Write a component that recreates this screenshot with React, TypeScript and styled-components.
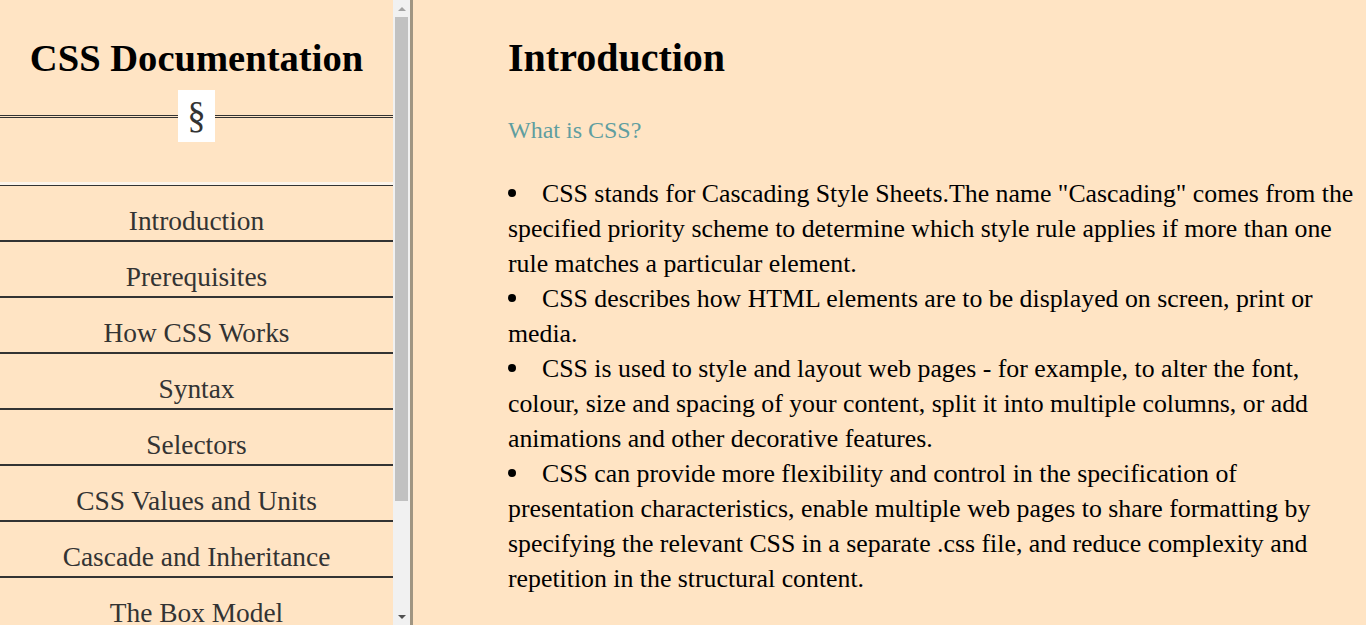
import React from 'react'
import styled, {createGlobalStyle} from 'styled-components'

const GlobalStyle = createGlobalStyle`
    html, body {
        margin: 0;
        padding: 0;
        background-color: #ffe4c4;
        font-family: "Liberation Serif", "Times New Roman", serif;
    }
`

const topics = [
    'Introduction',
    'Prerequisites',
    'How CSS Works',
    'Syntax',
    'Selectors',
    'CSS Values and Units',
    'Cascade and Inheritance',
    'The Box Model',
    'Backgrounds and Borders',
    'Reference',
]

const points = [
    'CSS stands for Cascading Style Sheets.The name "Cascading" comes from the specified priority scheme to determine which style rule applies if more than one rule matches a particular element.',
    'CSS describes how HTML elements are to be displayed on screen, print or media.',
    'CSS is used to style and layout web pages - for example, to alter the font, colour, size and spacing of your content, split it into multiple columns, or add animations and other decorative features.',
    'CSS can provide more flexibility and control in the specification of presentation characteristics, enable multiple web pages to share formatting by specifying the relevant CSS in a separate .css file, and reduce complexity and repetition in the structural content.',
]

const App: React.FC = () => {
    return (
        <>
            <GlobalStyle />
            <Page>
                <Sidebar>
                    <NavPane>
                        <Header>
                            <Title>CSS Documentation</Title>
                            <Divider>
                                <Rule />
                                <Section>§</Section>
                                <Rule />
                            </Divider>
                        </Header>
                        <NavList>
                            {topics.map(topic => (
                                <NavLink key={topic} href={'#' + topic.replace(/ /g, '_')}>
                                    {topic}
                                </NavLink>
                            ))}
                        </NavList>
                    </NavPane>

                    {/* the browser hides real scrollbars here, so draw one */}
                    <ScrollBar>
                        <ScrollButton>
                            <Arrow up />
                        </ScrollButton>
                        <Track>
                            <Thumb style={{height: 484}} />
                        </Track>
                        <ScrollButton>
                            <Arrow />
                        </ScrollButton>
                    </ScrollBar>
                </Sidebar>

                <Main>
                    <Heading>Introduction</Heading>
                    <SubHeading>What is CSS?</SubHeading>
                    <Points>
                        {points.map((p, i) => <Point key={i}>{p}</Point>)}
                    </Points>
                </Main>
            </Page>
        </>
    )
}

export default App

const Page = styled.div`
    display: flex;
    height: 100vh;
    overflow: hidden;
`

const Sidebar = styled.nav`
    flex-shrink: 0;
    display: flex;
    height: 100vh;
    border-right: 3px solid #a09582;
`

const NavPane = styled.div`
    width: 393px;
    height: 100%;
    overflow: hidden;
`

const ScrollBar = styled.div`
    width: 17px;
    display: flex;
    flex-direction: column;
    background-color: #f1f1f1;
`

const ScrollButton = styled.div`
    height: 17px;
    display: flex;
    justify-content: center;
    align-items: center;
`

const Arrow = styled.div<{up?: boolean}>`
    width: 0;
    height: 0;
    border-left: 4px solid transparent;
    border-right: 4px solid transparent;
    ${props => props.up
        ? 'border-bottom: 4px solid #a3a3a3;'
        : 'border-top: 4px solid #505050;'}
`

const Track = styled.div`
    flex: 1;
    padding: 0 2px;
`

const Thumb = styled.div`
    background-color: #c1c1c1;
`

const Header = styled.header`
    padding: 36px 0 40px;
    text-align: center;
    border-bottom: 3px solid #fcf4ea;
`

const Title = styled.h1`
    margin: 0 0 10px;
    font-size: 38.6px;
    line-height: 44px;
    font-weight: bold;
    color: #000;
`

const Divider = styled.div`
    display: flex;
    align-items: center;
`

const Rule = styled.div`
    flex: 1;
    border-top: 3px double #333;
`

const Section = styled.span`
    width: 37px;
    height: 52px;
    background-color: #fff;
    color: #333;
    font-size: 37px;
    line-height: 52px;
    text-align: center;
`

const NavList = styled.div`
    display: flex;
    flex-direction: column;
    border-top: 1px solid #333;
`

const NavLink = styled.a`
    display: block;
    box-sizing: border-box;
    height: 56px;
    padding-top: 20px;
    font-size: 27.4px;
    line-height: 30px;
    color: #333;
    text-align: center;
    text-decoration: none;
    border-bottom: 2px solid #333;
`

const Main = styled.main`
    flex: 1;
    padding: 35px 3px 0 95px;
    color: #000;
`

const Heading = styled.h1`
    margin: 0;
    font-size: 40px;
    line-height: 46px;
    font-weight: bold;
`

const SubHeading = styled.h2`
    margin: 35px 0 0;
    font-size: 24px;
    line-height: 28px;
    font-weight: normal;
    color: cadetblue;
`

const Points = styled.ul`
    margin: 32px 0 0;
    padding: 0;
    list-style: none;
`

const Point = styled.li`
    font-size: 25.8px;
    line-height: 35px;

    &::before {
        content: "";
        display: inline-block;
        width: 8px;
        height: 8px;
        margin-right: 26px;
        border-radius: 50%;
        background-color: #000;
        vertical-align: 5px;
    }
`
